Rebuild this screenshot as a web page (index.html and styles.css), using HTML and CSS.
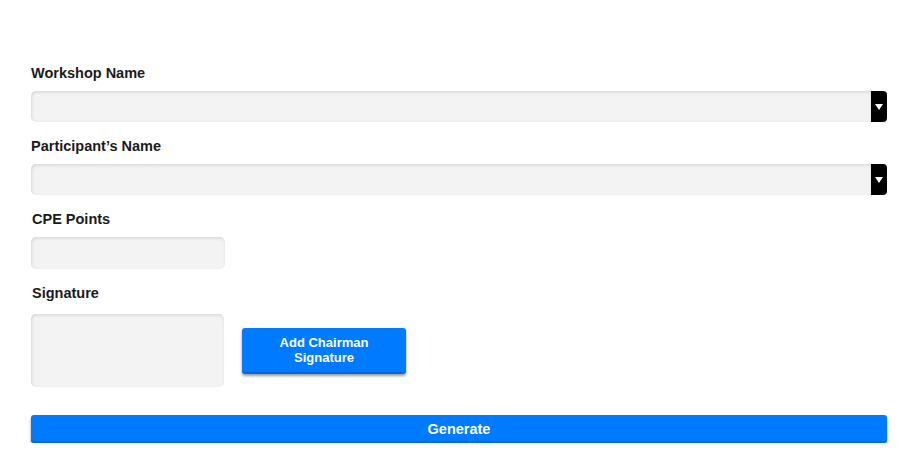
FILE: index.html
```html
<!DOCTYPE html>
<html lang="en">
<head>
<meta charset="utf-8">
<title>Certificate Form</title>
<link rel="stylesheet" href="styles.css">
</head>
<body>
<form class="form">
  <div class="field">
    <label class="label">Workshop Name</label>
    <div class="select">
      <div class="select-box"></div>
      <div class="select-arrow"><span class="tri"></span></div>
    </div>
  </div>
  <div class="field">
    <label class="label">Participant’s Name</label>
    <div class="select">
      <div class="select-box"></div>
      <div class="select-arrow"><span class="tri"></span></div>
    </div>
  </div>
  <div class="field">
    <label class="label label-cpe">CPE Points</label>
    <div class="input input-cpe"></div>
  </div>
  <div class="field">
    <label class="label label-sig">Signature</label>
    <div class="sig-row">
      <div class="input sig-box"></div>
      <button type="button" class="btn btn-add">Add Chairman<br>Signature</button>
    </div>
  </div>
  <button type="button" class="btn btn-generate">Generate</button>
</form>
</body>
</html>
```
FILE: styles.css
```css
html, body {
  margin: 0;
  padding: 0;
  background: #ffffff;
}
body {
  font-family: "Liberation Sans", Arial, sans-serif;
  color: #1a1a1a;
}
.form {
  display: flex;
  flex-direction: column;
  padding: 65px 29px 0 31px;
}
.field {
  display: flex;
  flex-direction: column;
  margin-bottom: 16px;
}
.label {
  display: block;
  font-size: 14.5px;
  font-weight: bold;
  line-height: 16px;
  height: 16px;
  margin-bottom: 10px;
  color: #1a1a1a;
}
.label-cpe, .label-sig {
  padding-left: 1px;
}
.label-sig {
  margin-bottom: 13px;
}
.select {
  display: flex;
  height: 31px;
}
.select-box {
  flex: 1;
  background: #f3f3f3;
  border-radius: 5px 0 0 5px;
  box-shadow: inset 0 2px 3px rgba(0, 0, 0, 0.08), inset 2px 0 3px rgba(0, 0, 0, 0.05);
}
.select-arrow {
  width: 16px;
  background: #000000;
  border-radius: 0 4px 4px 0;
  display: flex;
  align-items: center;
  justify-content: center;
}
.tri {
  width: 0;
  height: 0;
  border-left: 4.5px solid transparent;
  border-right: 4.5px solid transparent;
  border-top: 6px solid #ffffff;
}
.input {
  background: #f3f3f3;
  border-radius: 5px;
  box-shadow: inset 0 2px 3px rgba(0, 0, 0, 0.08), inset 2px 0 3px rgba(0, 0, 0, 0.05);
}
.input-cpe {
  width: 194px;
  height: 32px;
}
.sig-row {
  display: flex;
  align-items: center;
  gap: 18px;
}
.sig-box {
  width: 193px;
  height: 73px;
}
.btn {
  font-family: "Liberation Sans", Arial, sans-serif;
  font-weight: bold;
  color: #ffffff;
  background: #007bff;
  border: none;
  border-radius: 3px;
  box-shadow: 0 2px 3px rgba(0, 0, 0, 0.4), inset 0 -2px 1px rgba(0, 0, 0, 0.15);
  padding: 0;
  cursor: pointer;
}
.btn-add {
  width: 164px;
  height: 46px;
  font-size: 13px;
  line-height: 15px;
  padding-bottom: 2px;
}
.btn-generate {
  margin-top: 12px;
  width: 100%;
  height: 28px;
  font-size: 14.5px;
  line-height: 28px;
}
```
